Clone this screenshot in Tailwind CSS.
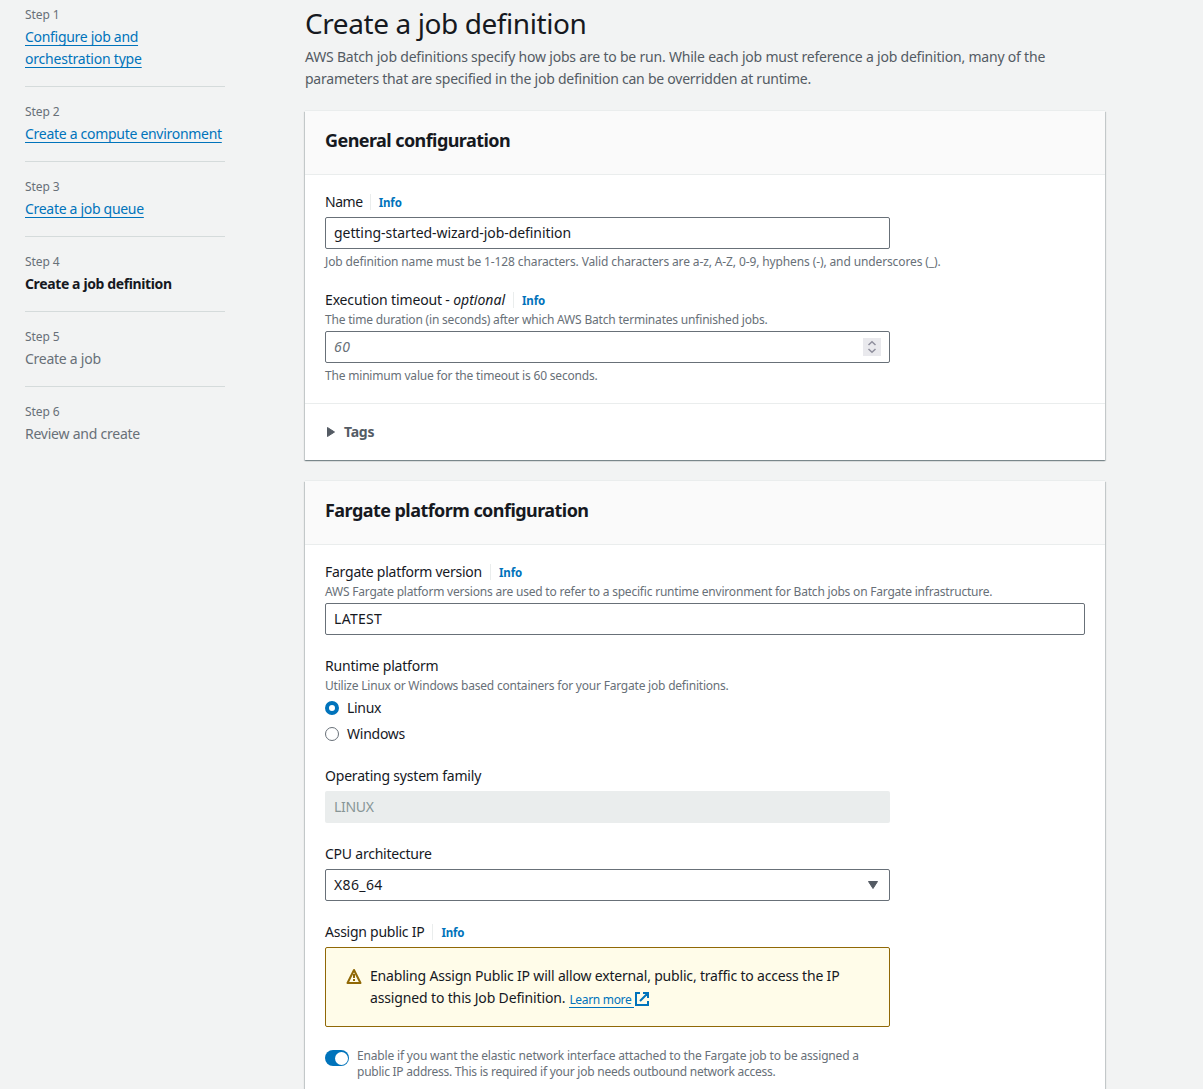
<!DOCTYPE html>
<html lang="en">
<head>
<meta charset="utf-8">
<title>Create a job definition</title>
<script src="https://cdn.jsdelivr.net/npm/@tailwindcss/browser@4"></script>
</head>
<body class="h-[1089px] overflow-hidden bg-[#f2f3f3] font-['Noto_Sans',sans-serif] text-sm leading-[22px] text-[#16191f] whitespace-nowrap">
<div class="flex">
  <nav class="ml-[25px] mt-[4px] w-[200px] shrink-0 text-[#687078]">
    <div class="border-b border-[#d5dbdb] pb-4">
      <div class="text-xs leading-[22px] tracking-[-0.09px]">Step 1</div>
      <a class="block text-[#0073bb] underline underline-offset-[3px] decoration-1 [text-decoration-skip-ink:none]"><span class="tracking-[-0.3px]">Configure job and</span><br><span class="tracking-[-0.21px]">orchestration type</span></a>
    </div>
    <div class="border-b border-[#d5dbdb] pb-4 pt-[14px]">
      <div class="text-xs leading-[22px] tracking-[-0.09px]">Step 2</div>
      <a class="block text-[#0073bb] underline underline-offset-[3px] decoration-1 [text-decoration-skip-ink:none] tracking-[-0.29px]">Create a compute environment</a>
    </div>
    <div class="border-b border-[#d5dbdb] pb-4 pt-[14px]">
      <div class="text-xs leading-[22px] tracking-[-0.09px]">Step 3</div>
      <a class="block text-[#0073bb] underline underline-offset-[3px] decoration-1 [text-decoration-skip-ink:none] tracking-[-0.3px]">Create a job queue</a>
    </div>
    <div class="border-b border-[#d5dbdb] pb-4 pt-[14px]">
      <div class="text-xs leading-[22px] tracking-[-0.09px]">Step 4</div>
      <div class="font-bold tracking-[-0.38px] text-[#16191f]">Create a job definition</div>
    </div>
    <div class="border-b border-[#d5dbdb] pb-4 pt-[14px]">
      <div class="text-xs leading-[22px] tracking-[-0.09px]">Step 5</div>
      <div class="tracking-[-0.26px]">Create a job</div>
    </div>
    <div class="pt-[14px]">
      <div class="text-xs leading-[22px] tracking-[-0.09px]">Step 6</div>
      <div class="tracking-[-0.235px]">Review and create</div>
    </div>
  </nav>

  <main class="ml-[80px] w-[800px] shrink-0">
    <h1 class="mt-[5px] text-[28px] leading-[36px] tracking-[-0.414px]">Create a job definition</h1>
    <p class="mt-[5px] text-[#545b64]"><span class="tracking-[-0.204px]">AWS Batch job definitions specify how jobs are to be run. While each job must reference a job definition, many of the</span><br><span class="tracking-[-0.236px]">parameters that are specified in the job definition can be overridden at runtime.</span></p>

    <section class="mt-[21px] h-[349px] bg-white shadow-[0_1px_1px_0_rgba(0,28,36,0.3),1px_1px_1px_0_rgba(0,28,36,0.15),-1px_1px_1px_0_rgba(0,28,36,0.15),0_-1px_0_0_#eaeded]">
      <h2 class="h-[64px] border-b border-[#eaeded] bg-[#fafafa] px-5 pt-[18px] text-lg leading-[22px] font-bold tracking-[-0.571px]">General configuration</h2>
      <div class="h-[229px] border-b border-[#eaeded] px-5 pt-4">
        <div class="flex items-center"><span class="tracking-[-0.45px]">Name</span><span class="ml-[7px] h-4 border-l border-[#eaeded]"></span><a class="ml-2 pt-[2px] text-[11.5px] leading-5 font-bold tracking-[-0.15px] text-[#0073bb]">Info</a></div>
        <div class="mt-[4px] flex h-8 w-[565px] items-center rounded-[2px] border border-[#687078] px-2 tracking-[-0.063px]">getting-started-wizard-job-definition</div>
        <div class="mt-[5px] text-xs leading-4 tracking-[-0.121px] text-[#687078]">Job definition name must be 1-128 characters. Valid characters are a-z, A-Z, 0-9, hyphens (-), and underscores (_).</div>
        <div class="mt-[19px] flex items-center"><span class="whitespace-pre tracking-[-0.15px]">Execution timeout - </span><span class="italic">optional</span><span class="ml-[8px] h-4 border-l border-[#eaeded]"></span><a class="ml-2 pt-[2px] text-[11.5px] leading-5 font-bold tracking-[-0.15px] text-[#0073bb]">Info</a></div>
        <div class="mt-px text-xs leading-4 tracking-[-0.19px] text-[#687078]">The time duration (in seconds) after which AWS Batch terminates unfinished jobs.</div>
        <div class="mt-[3px] flex h-8 w-[565px] items-center justify-between rounded-[2px] border border-[#687078] px-2 italic text-[#687078]"><span class="tracking-[0.6px]">60</span>
          <svg class="size-[18px] shrink-0" viewBox="0 0 18 18"><path fill="#e9e9ed" d="M0 0h18v18H0z"/><path d="M5.500 7 9 3.700 12.500 7M5.500 11 9 14.300 12.500 11" fill="none" stroke="#8f8f9d" stroke-width="1.500"/></svg>
        </div>
        <div class="mt-[5px] text-xs leading-4 tracking-[-0.193px] text-[#687078]">The minimum value for the timeout is 60 seconds.</div>
      </div>
      <div class="flex items-center px-5 pt-[17px] font-bold text-[#545b64]"><svg class="ml-[2px] mr-[9px] h-[10px] w-[8px]" viewBox="0 0 8 10"><path fill="#545b64" stroke="#545b64" stroke-linejoin="round" d="M.5.500 7.500 5 .5 9.500z"/></svg><span class="tracking-[-0.25px]">Tags</span></div>
    </section>

    <section class="mt-[21px] h-[640px] bg-white shadow-[0_1px_1px_0_rgba(0,28,36,0.3),1px_1px_1px_0_rgba(0,28,36,0.15),-1px_1px_1px_0_rgba(0,28,36,0.15),0_-1px_0_0_#eaeded]">
      <h2 class="h-[64px] border-b border-[#eaeded] bg-[#fafafa] px-5 pt-[18px] text-lg leading-[22px] font-bold tracking-[-0.551px]">Fargate platform configuration</h2>
      <div class="px-5 pt-4">
        <div class="flex items-center"><span class="tracking-[-0.249px]">Fargate platform version</span><span class="ml-[8px] h-4 border-l border-[#eaeded]"></span><a class="ml-2 pt-[2px] text-[11.5px] leading-5 font-bold tracking-[-0.15px] text-[#0073bb]">Info</a></div>
        <div class="mt-px text-xs leading-4 tracking-[-0.207px] text-[#687078]">AWS Fargate platform versions are used to refer to a specific runtime environment for Batch jobs on Fargate infrastructure.</div>
        <div class="mt-[3px] flex h-8 items-center rounded-[2px] border border-[#687078] px-2 tracking-[0.3px]">LATEST</div>
        <div class="mt-5 tracking-[-0.193px]">Runtime platform</div>
        <div class="mt-px text-xs leading-4 tracking-[-0.21px] text-[#687078]">Utilize Linux or Windows based containers for your Fargate job definitions.</div>
        <div class="mt-[3px] flex items-center gap-2"><span class="size-[14px] rounded-full border-4 border-[#0073bb] bg-white"></span><span class="tracking-[-0.3px]">Linux</span></div>
        <div class="mt-[4px] flex items-center gap-2"><span class="size-[14px] rounded-full border border-[#687078] bg-white"></span><span class="tracking-[-0.25px]">Windows</span></div>
        <div class="mt-5 tracking-[-0.2px]">Operating system family</div>
        <div class="mt-[4px] flex h-8 w-[565px] items-center rounded-[2px] bg-[#eaeded] px-[9px] tracking-[-0.3px] text-[#879596]">LINUX</div>
        <div class="mt-5 tracking-[-0.23px]">CPU architecture</div>
        <div class="mt-[4px] flex h-8 w-[565px] items-center justify-between rounded-[2px] border border-[#687078] pl-2 pr-[11px]"><span class="tracking-[0.36px]">X86_64</span><svg class="h-2 w-[10px]" viewBox="0 0 10 8"><path fill="#545b64" stroke="#545b64" stroke-linejoin="round" d="M.5.5h9L5 7.500z"/></svg></div>
        <div class="mt-5 flex items-center"><span class="tracking-[-0.26px]">Assign public IP</span><span class="ml-[8px] h-4 border-l border-[#eaeded]"></span><a class="ml-2 pt-[2px] text-[11.5px] leading-5 font-bold tracking-[-0.15px] text-[#0073bb]">Info</a></div>
        <div class="mt-[4px] flex h-20 w-[565px] rounded-[2px] border border-[#906806] bg-[#fffce9] pl-5 pt-[17px]">
          <svg class="mt-[3px] h-4 w-4 shrink-0" viewBox="0 0 16 16" fill="none" stroke="#906806" stroke-width="2"><path d="M8 2 14.500 15h-13z" stroke-linejoin="round"/><path d="M8 6v4M8 11v2"/></svg>
          <div class="ml-2"><span class="tracking-[-0.182px]">Enabling Assign Public IP will allow external, public, traffic to access the IP</span>
            <div class="flex"><span class="tracking-[-0.145px]">assigned to this Job Definition.</span><a class="ml-[4px] flex text-xs leading-[22px] text-[#0073bb]"><span class="mt-[4px] h-[17px] w-[65px] border-b border-[#0073bb] leading-[17px] tracking-[-0.32px]">Learn more</span><svg class="ml-px mt-[5px] h-[14px] w-[14px]" viewBox="0 0 14 14" fill="none" stroke="#0073bb" stroke-width="2"><path d="M5 1H1v12h12V9M8 1h5v5M13 1 5 9"/></svg></a></div>
          </div>
        </div>
        <div class="mt-[21px] flex text-xs leading-4 text-[#687078]">
          <div class="mt-[2px] flex h-4 w-6 items-center justify-end rounded-full bg-[#0073bb] pr-px"><span class="size-[13px] rounded-full bg-white"></span></div>
          <div class="ml-2"><span class="tracking-[-0.168px]">Enable if you want the elastic network interface attached to the Fargate job to be assigned a</span><br><span class="tracking-[-0.244px]">public IP address. This is required if your job needs outbound network access.</span></div>
        </div>
      </div>
    </section>
  </main>
</div>
</body>
</html>
